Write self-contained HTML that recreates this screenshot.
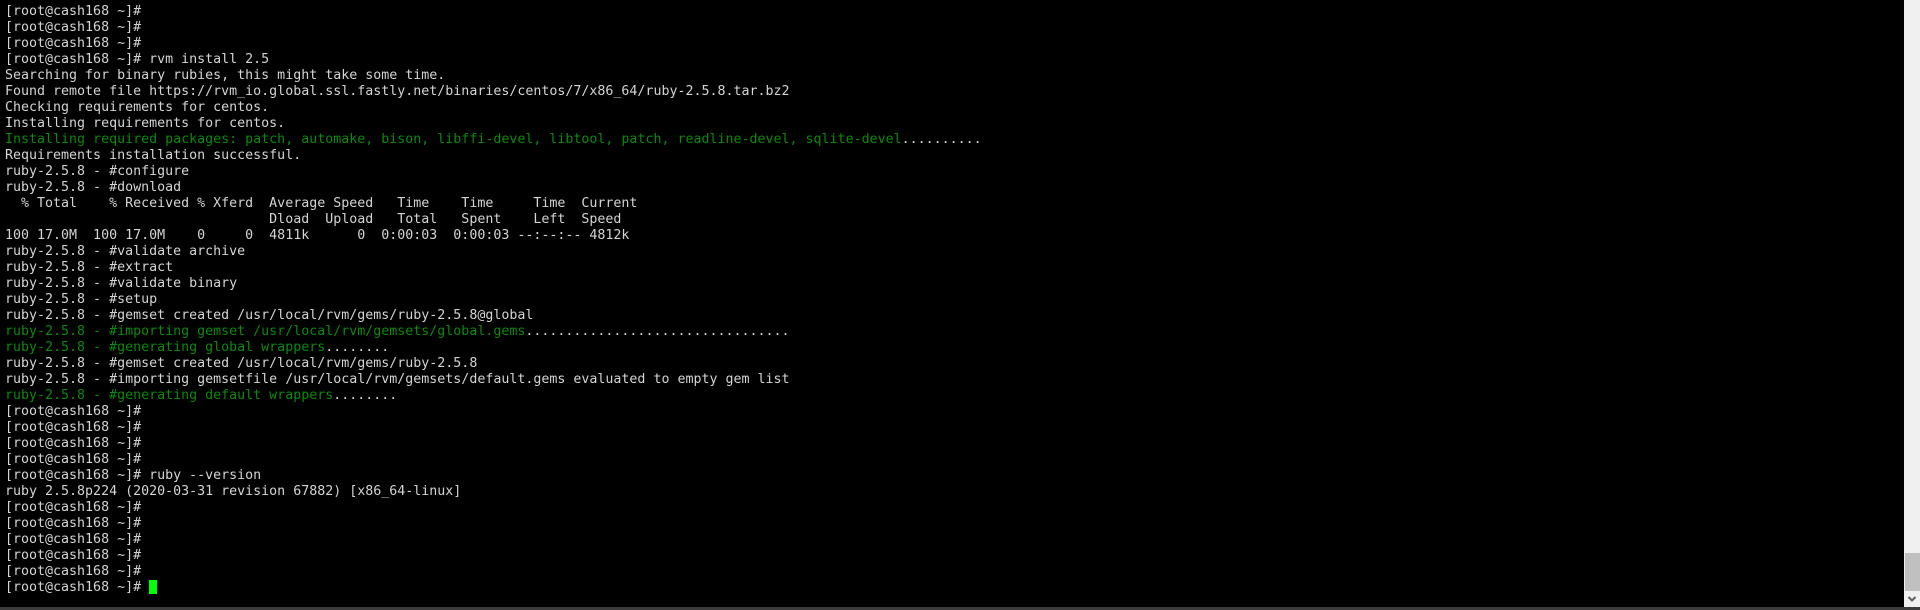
<!DOCTYPE html>
<html><head><meta charset="utf-8"><style>
html,body{margin:0;padding:0;background:#000;width:1920px;height:610px;overflow:hidden;position:relative}
pre{margin:0;position:absolute;left:5px;top:4px;font-family:"DejaVu Sans Mono","Liberation Mono",monospace;font-size:13.3px;line-height:16px;color:#d4d4d4;letter-spacing:0}
.g{color:#0a8a0a}
.cur{display:inline-block;width:8px;height:14px;background:#00ff00;vertical-align:-3px}
#sb{position:absolute;left:1904px;top:0;width:16px;height:607px;background:#f0f0f0}
#th{position:absolute;left:1905px;top:553px;width:15px;height:38px;background:#c0c0c0}
#bot{position:absolute;left:0;top:607px;width:1920px;height:3px;background:#3c3c3c}
</style></head><body>
<pre>[root@cash168 ~]#
[root@cash168 ~]#
[root@cash168 ~]#
[root@cash168 ~]# rvm install 2.5
Searching for binary rubies, this might take some time.
Found remote file https://rvm_io.global.ssl.fastly.net/binaries/centos/7/x86_64/ruby-2.5.8.tar.bz2
Checking requirements for centos.
Installing requirements for centos.
<span class="g">Installing required packages: patch, automake, bison, libffi-devel, libtool, patch, readline-devel, sqlite-devel</span>..........
Requirements installation successful.
ruby-2.5.8 - #configure
ruby-2.5.8 - #download
  % Total    % Received % Xferd  Average Speed   Time    Time     Time  Current
                                 Dload  Upload   Total   Spent    Left  Speed
100 17.0M  100 17.0M    0     0  4811k      0  0:00:03  0:00:03 --:--:-- 4812k
ruby-2.5.8 - #validate archive
ruby-2.5.8 - #extract
ruby-2.5.8 - #validate binary
ruby-2.5.8 - #setup
ruby-2.5.8 - #gemset created /usr/local/rvm/gems/ruby-2.5.8@global
<span class="g">ruby-2.5.8 - #importing gemset /usr/local/rvm/gemsets/global.gems</span>.................................
<span class="g">ruby-2.5.8 - #generating global wrappers</span>........
ruby-2.5.8 - #gemset created /usr/local/rvm/gems/ruby-2.5.8
ruby-2.5.8 - #importing gemsetfile /usr/local/rvm/gemsets/default.gems evaluated to empty gem list
<span class="g">ruby-2.5.8 - #generating default wrappers</span>........
[root@cash168 ~]#
[root@cash168 ~]#
[root@cash168 ~]#
[root@cash168 ~]#
[root@cash168 ~]# ruby --version
ruby 2.5.8p224 (2020-03-31 revision 67882) [x86_64-linux]
[root@cash168 ~]#
[root@cash168 ~]#
[root@cash168 ~]#
[root@cash168 ~]#
[root@cash168 ~]#
[root@cash168 ~]# <span class="cur"></span></pre>
<div id="sb"></div><div id="th"></div>
<svg style="position:absolute;left:1904px;top:591px" width="16" height="16"><path d="M4.5 6 L8 9.5 L11.5 6" stroke="#606060" stroke-width="2" fill="none"/></svg>
<div id="bot"></div>
</body></html>
